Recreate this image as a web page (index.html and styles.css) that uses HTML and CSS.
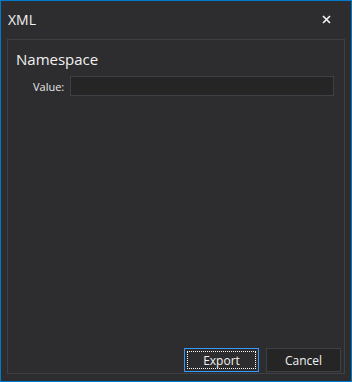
FILE: index.html
```html
<!DOCTYPE html>
<html lang="en">
<head>
<meta charset="UTF-8">
<meta name="viewport" content="width=device-width, initial-scale=1.0">
<title>XML</title>
<link rel="stylesheet" href="styles.css">
</head>
<body>
    <div class="window">
        <!-- Title bar -->
        <div class="titlebar">
            <span class="title">XML</span>
            <span class="close">
                <svg width="9" height="9" viewBox="0 0 9 9">
                    <path d="M1 1 L8 8 M8 1 L1 8" stroke="#f1f1f1" stroke-width="1.7" fill="none"/>
                </svg>
            </span>
        </div>

        <!-- Content panel -->
        <div class="panel">
            <h3 class="heading">Namespace</h3>
            <div class="field">
                <label class="label">Value:</label>
                <div class="input"></div>
            </div>

            <div class="buttons">
                <button class="btn btn-default"><span class="focus">Export</span></button>
                <button class="btn">Cancel</button>
            </div>
        </div>
    </div>
</body>
</html>
```

FILE: styles.css
```css
body, html {
    margin: 0;
    padding: 0;
    font-family: "Open Sans", "Noto Sans", sans-serif;
    color: #f1f1f1;
    background: #2d2d30;
}

.window {
    box-sizing: border-box;
    width: 352px;
    height: 382px;
    border: 1px solid #007acc;
    background: #2d2d30;
    display: flex;
    flex-direction: column;
    padding: 0 6px 7px 6px;
}

.titlebar {
    height: 38px;
    display: flex;
    align-items: center;
    justify-content: space-between;
    flex-shrink: 0;
}

.title {
    font-size: 14px;
    padding-left: 1px;
    margin-top: -1px;
}

.close {
    display: flex;
    margin-right: 14px;
    margin-top: -1px;
}

.panel {
    flex: 1;
    border: 1px solid #3f3f46;
    display: flex;
    flex-direction: column;
    padding: 0 10px 1px 8px;
}

.heading {
    font-size: 15px;
    font-weight: normal;
    margin: 9px 0 7px 0;
}

.field {
    display: flex;
    align-items: center;
    gap: 6px;
    padding-left: 17px;
}

.label {
    font-size: 11px;
    color: #e6e6e6;
}

.input {
    flex: 1;
    height: 18px;
    background: #252526;
    border: 1px solid #3f3f46;
}

.buttons {
    margin-top: auto;
    display: flex;
    justify-content: flex-end;
    gap: 7px;
    margin-right: -7px;
}

.btn {
    box-sizing: border-box;
    width: 75px;
    height: 24px;
    font-family: "Open Sans", "Noto Sans", sans-serif;
    font-size: 12px;
    color: #f1f1f1;
    background: #252526;
    border: 1px solid #3f3f46;
    padding: 0;
    cursor: pointer;
}

.btn-default {
    background: #2d2d30;
    border-color: #3399ff;
    padding: 2px;
}

.btn-default .focus {
    display: flex;
    align-items: center;
    justify-content: center;
    height: 100%;
    box-sizing: border-box;
    border: 1px dotted #ffffff;
}
```
